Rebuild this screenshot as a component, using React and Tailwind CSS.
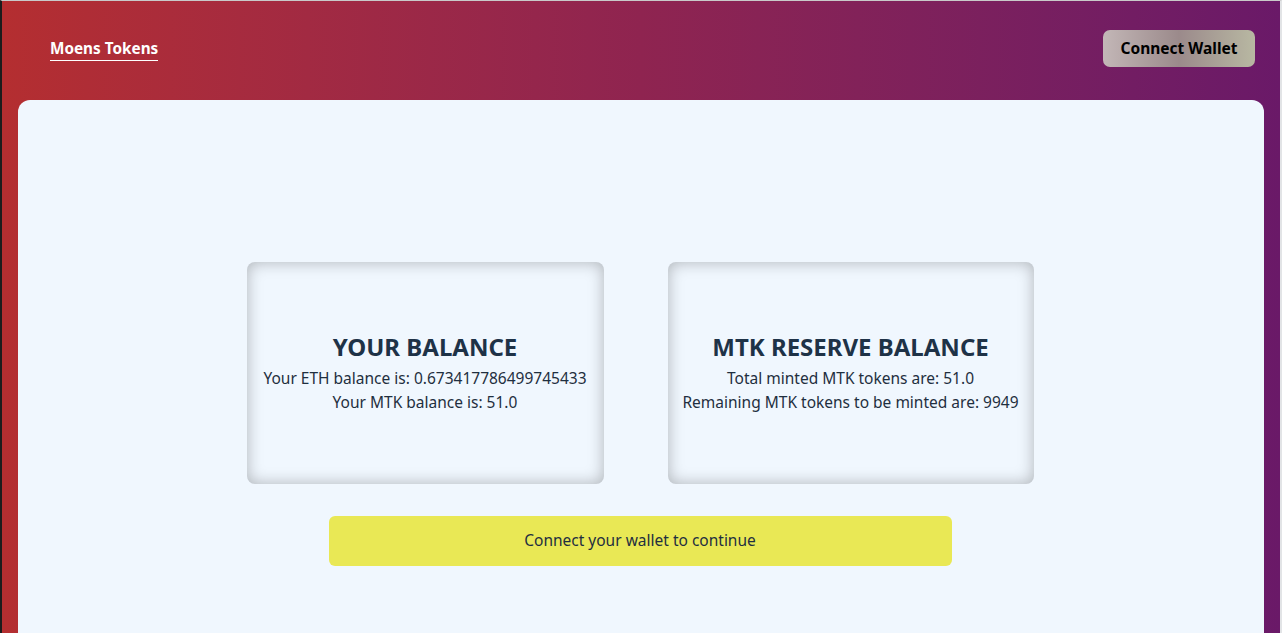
export default function App() {
  const font = { fontFamily: '"Noto Sans", "Open Sans", sans-serif' };
  return (
    <div
      className="h-[633px] w-full overflow-hidden bg-linear-to-r from-[#b42e30] via-[#8f2450] to-[#6a1968] border-l-2 border-l-[#1c1c1c] border-t border-t-[#c9c9c9] border-r-2 border-r-[#e2e4e6] flex flex-col"
      style={font}
    >
      <header className="h-[99px] shrink-0 flex items-start justify-between pl-[48px] pr-[25px]">
        <span className="mt-[37px] text-white font-bold text-[15.3px] leading-[20px] border-b border-white pb-[2px]">
          Moens Tokens
        </span>
        <button className="mt-[29px] h-[37px] w-[152px] rounded-[7px] bg-linear-to-r from-[#c3b7b7] via-[#9b8a8b] to-[#b8b8a2] text-black font-bold text-[15.5px]">
          Connect Wallet
        </button>
      </header>
      <main className="flex-1 mx-[16px] rounded-t-[12px] bg-[#f0f7fe] flex flex-col items-center pt-[162px]">
        <div className="flex gap-[64px] -translate-x-[1px]">
          <div className="w-[357px] h-[222px] rounded-[8px] shadow-[inset_0_0_16px_rgba(0,0,0,0.28)] flex flex-col items-center justify-center text-[#1f2f40] text-center">
            <h2 className="text-[24px] font-bold leading-[30px] mb-[4px] text-[#1e3247]">YOUR BALANCE</h2>
            <p className="text-[15.5px] leading-[24px]">Your ETH balance is: 0.673417786499745433</p>
            <p className="text-[15.5px] leading-[24px]">Your MTK balance is: 51.0</p>
          </div>
          <div className="w-[366px] h-[222px] rounded-[8px] shadow-[inset_0_0_16px_rgba(0,0,0,0.28)] flex flex-col items-center justify-center text-[#1f2f40] text-center">
            <h2 className="text-[24px] font-bold leading-[30px] mb-[4px] text-[#1e3247]">MTK RESERVE BALANCE</h2>
            <p className="text-[15.5px] leading-[24px]">Total minted MTK tokens are: 51.0</p>
            <p className="text-[15.5px] leading-[24px]">Remaining MTK tokens to be minted are: 9949</p>
          </div>
        </div>
        <div className="mt-[32px] w-[623px] h-[50px] rounded-[6px] bg-[#e9e855] flex items-center justify-center text-[15.5px] text-[#1f2f40] -translate-x-[1px]">
          Connect your wallet to continue
        </div>
      </main>
    </div>
  );
}
